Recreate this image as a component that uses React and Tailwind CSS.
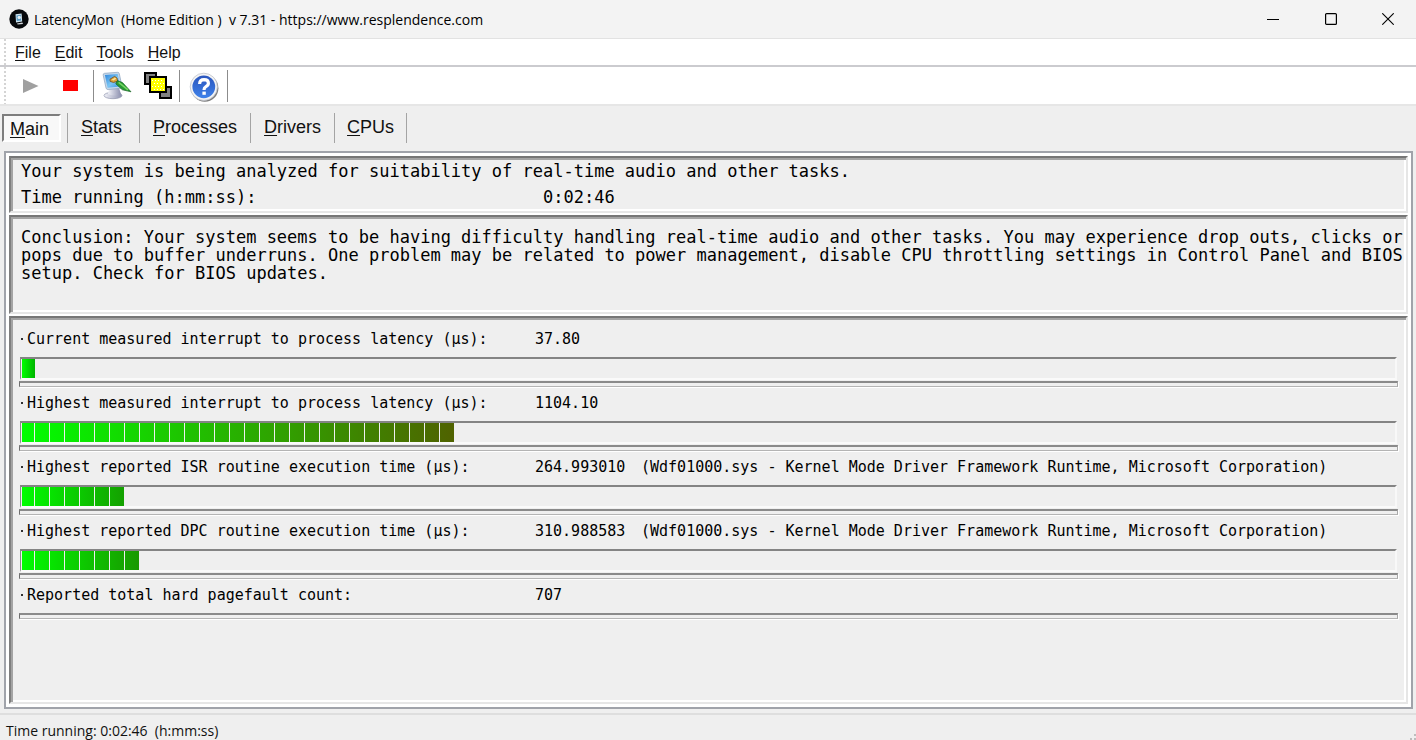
const MONO = "font-['DejaVu_Sans_Mono',monospace]";

const FRAME =
  "border-2 border-t-[#767676] border-l-[#7e7e7e] border-r-[#e6e6e6] border-b-[#e6e6e6] shadow-[inset_2px_2px_0_#a3a3a3,inset_-2px_-2px_0_#ffffff]";

const MENUS = ["File", "Edit", "Tools", "Help"];
const TABS = ["Main", "Stats", "Processes", "Drivers", "CPUs"];
const DRIVER =
  "(Wdf01000.sys - Kernel Mode Driver Framework Runtime, Microsoft Corporation)";

const METERS = [
  { label: "Current measured interrupt to process latency (µs):", value: "37.80", count: 1, end: [0, 180] },
  { label: "Highest measured interrupt to process latency (µs):", value: "1104.10", count: 29, end: [80, 98] },
  { label: "Highest reported ISR routine execution time (µs):", value: "264.993010", note: DRIVER, count: 7, end: [20, 160] },
  { label: "Highest reported DPC routine execution time (µs):", value: "310.988583", note: DRIVER, count: 8, end: [24, 152] },
];

function Accel({ text }) {
  return (
    <>
      <span className="underline decoration-1 underline-offset-2">{text[0]}</span>
      {text.slice(1)}
    </>
  );
}

function segmentColor(t, end) {
  const r = Math.round(end[0] * t);
  const g = Math.round(255 + (end[1] - 255) * t);
  return `rgb(${r},${g},0)`;
}

function Segments({ count, end }) {
  return Array.from({ length: count }, (_, i) => (
    <span
      key={i}
      className="h-full w-[14px] shrink-0 first:w-3 only:w-[13px]"
      style={{
        background: `linear-gradient(to right, ${segmentColor(i / count, end)}, ${segmentColor((i + 1) / count, end)})`,
      }}
    />
  ));
}

function Divider() {
  return (
    <div className="h-[6px] border border-t-2 border-t-[#8a8a8a] border-r-[#a8a8a8] border-b-[#b4b4b4] border-l-[#6e6e6e] shadow-[1px_1px_0_#ffffff]" />
  );
}

function Reading({ label, value, note }) {
  return (
    <div className="flex h-9 items-center whitespace-pre pl-[2px] text-[15px] leading-5">
      <span className="flex w-[514px] shrink-0 items-center gap-1">
        <span className="size-[2px] bg-[#303030]" />
        {label}
      </span>
      <span className="w-[106px] shrink-0">{value}</span>
      {note && <span>{note}</span>}
    </div>
  );
}

function Meter({ count, end, ...reading }) {
  return (
    <section className="h-16">
      <Reading {...reading} />
      <div
        role="meter"
        aria-label={reading.label}
        aria-valuenow={parseFloat(reading.value)}
        className="mx-[1px] mb-[1px] flex h-[23px] gap-[1px] border-t-2 border-r-2 border-b-2 border-l border-t-[#848484] border-l-[#8c8c8c] border-r-[#f8f8f8] border-b-[#fafafa] pl-[1px]"
      >
        <Segments count={count} end={end} />
      </div>
      <Divider />
    </section>
  );
}

function AppIcon() {
  return (
    <svg className="size-5" viewBox="0 0 20 20">
      <circle cx="10" cy="10" r="9.7" fill="#07090c" />
      <path d="M6.5 5.2 12.6 4.4 13.2 12.6 7 13.4z" fill="#cfe3ef" />
      <path d="M7.4 6.4 11.8 5.8 12.2 11.4 7.8 12z" fill="#5c9cc4" />
      <circle cx="10.2" cy="8.4" r="1.7" fill="#e8f2f6" />
      <path d="M8 14.4 13.4 13.6 14 15 8.6 15.4z" fill="#d5d9dc" />
    </svg>
  );
}

function OptionsIcon() {
  return (
    <svg className="size-[30px]" viewBox="0 0 30 30">
      <defs>
        <linearGradient id="screen" x1="0" y1="0" x2="1" y2="1">
          <stop offset="0" stopColor="#2d86dc" />
          <stop offset="0.55" stopColor="#7cc6f4" />
          <stop offset="1" stopColor="#3a92df" />
        </linearGradient>
        <linearGradient id="stand" x1="0" y1="0" x2="1" y2="0">
          <stop offset="0" stopColor="#f1f2f8" />
          <stop offset="1" stopColor="#8b8fae" />
        </linearGradient>
      </defs>
      <ellipse cx="11" cy="24.5" rx="9" ry="3.2" fill="url(#stand)" stroke="#9195ad" strokeWidth=".7" />
      <path d="M7 17h10l2 6q-6 3-13 0z" fill="url(#stand)" />
      <path d="M1.2 4.2Q.8 2.6 2.5 2.3L15.5 1.3Q17 1.2 17.3 2.7L20 15.5Q20.2 17 18.8 17.2L6 18.6Q4.5 18.6 4 17z" fill="#c3d7ea" stroke="#8ba2bd" strokeWidth=".7" />
      <path d="M2.9 4.1 15.7 3 18 15.4 5.6 16.8z" fill="url(#screen)" />
      <path d="M8 8.2 12.6 5.4 15 7 15.6 10.3 11.4 11.4 8.2 10.4z" fill="#e0a63a" stroke="#704c19" strokeWidth=".8" />
      <path d="M9.8 8.6 13 6.8 14.4 7.8 11.2 9.6z" fill="#ffe39a" />
      <path d="M15.4 9.6 20.5 11.6 29 20.8 20.4 18.8 13.8 12.8z" fill="#269a32" stroke="#176124" strokeWidth=".7" />
      <path d="M16.6 11.4 26 18.8" stroke="#77d564" strokeWidth="1.6" />
    </svg>
  );
}

function WindowsIcon() {
  return (
    <svg className="size-7" viewBox="0 0 28 28" shapeRendering="crispEdges">
      <rect x="1" y="1" width="11" height="11" fill="#808080" stroke="#000" strokeWidth="2" />
      <rect x="16" y="15" width="11" height="11" fill="#808080" stroke="#000" strokeWidth="2" />
      <rect x="6" y="5" width="16" height="15" fill="#ffff00" stroke="#000" strokeWidth="2" />
      <path
        d="M8 8.5h1m2 0h1m2 0h1m2 0h1M10 11.5h1m2 0h1m2 0h1m2 0h1M8 14.5h1m2 0h1m2 0h1m2 0h1M10 17.5h1m2 0h1m2 0h1m2 0h1"
        stroke="#fff"
        strokeWidth="1"
      />
    </svg>
  );
}

function HelpIcon() {
  return (
    <svg className="size-[30px]" viewBox="0 0 30 30">
      <defs>
        <linearGradient id="ball" x1="0" y1="0" x2="0" y2="1">
          <stop offset="0" stopColor="#2a55bd" />
          <stop offset="1" stopColor="#3f82ea" />
        </linearGradient>
      </defs>
      <circle cx="15.8" cy="16.2" r="13.6" fill="#7d7d7d" />
      <circle cx="14.8" cy="14.8" r="13.6" fill="#f4f4f4" stroke="#bfc3cb" strokeWidth=".8" />
      <circle cx="14.8" cy="14.8" r="11.4" fill="url(#ball)" />
      <path d="M10.6 12Q10.8 7.6 15 7.6 19.4 7.7 19.4 11.2 19.4 13.3 16.9 14.6 15 15.6 15 18" fill="none" stroke="#fff" strokeWidth="3.2" />
      <rect x="13.4" y="19.6" width="3.4" height="3.2" fill="#fff" />
    </svg>
  );
}

function Grip() {
  return <span className="ml-1 w-[2px] self-stretch bg-[repeating-linear-gradient(to_bottom,#d4d4d4_0_2px,#ffffff_2px_4px)]" />;
}

function Separator() {
  return <span className="h-8 w-px bg-[#8c8c8c]" />;
}

export default function App() {
  return (
    <div className="flex min-h-screen flex-col bg-[#efefef] font-['Liberation_Sans',Arial,sans-serif] text-[#111111]">
      <header className="flex h-[39px] items-center border-b border-[#e2e2e2] bg-[#f3f3f3] pl-[9px]">
        <AppIcon />
        <h1 className="ml-[5px] flex-1 whitespace-pre font-['Open_Sans',sans-serif] text-[14px] text-black">
          {"LatencyMon  (Home Edition )  v 7.31 - https://www.resplendence.com"}
        </h1>
        <button aria-label="Minimize" className="flex h-full w-[58px] items-center justify-center">
          <svg className="size-3" viewBox="0 0 12 12"><path d="M0 6.5h12" stroke="#000" /></svg>
        </button>
        <button aria-label="Maximize" className="flex h-full w-[58px] items-center justify-center">
          <svg className="size-3" viewBox="0 0 12 12"><rect x=".6" y=".6" width="10.8" height="10.8" rx="1" fill="none" stroke="#000" strokeWidth="1.2" /></svg>
        </button>
        <button aria-label="Close" className="flex h-full w-14 items-center justify-center">
          <svg className="size-3" viewBox="0 0 12 12"><path d="M.3.3l11.4 11.4M11.7.3.3 11.7" stroke="#000" strokeWidth="1.1" /></svg>
        </button>
      </header>

      <nav className="flex h-7 items-center border-b-2 border-[#cbcbcf] bg-white text-[16px]">
        <Grip />
        <div className="ml-[9px] flex gap-[14px] pt-[2px]">
          {MENUS.map((m) => (
            <button key={m}><Accel text={m} /></button>
          ))}
        </div>
      </nav>

      <div role="toolbar" className="flex h-[39px] items-center border-b-2 border-[#e6e6e6] bg-white">
        <Grip />
        <button aria-label="Start" className="ml-[17px] mr-6">
          <svg className="block h-[14px] w-4" viewBox="0 0 16 14"><path d="M0 0 15.5 7 0 14z" fill="#a0a0a0" /></svg>
        </button>
        <button aria-label="Stop" className="mr-[15px] h-[11px] w-[15px] bg-[#ff0000]" />
        <Separator />
        <button aria-label="Options" className="mx-2"><OptionsIcon /></button>
        <button aria-label="Windows" className="ml-1 mr-[7px]"><WindowsIcon /></button>
        <Separator />
        <button aria-label="Help" className="ml-[9px] mr-2 pt-[2px]"><HelpIcon /></button>
        <Separator />
      </div>

      <div role="tablist" className="flex h-[45px] items-center pb-[2px] pl-[2px] text-[18px]">
        {TABS.map((t, i) =>
          i === 0 ? (
            <button key={t} role="tab" aria-selected="true" className="mr-[6px] h-7 w-[59px] border-2 border-t-[#7d7d7d] border-l-[#7d7d7d] border-r-white border-b-white bg-[#f8f8f8] pr-1">
              <Accel text={t} />
            </button>
          ) : (
            <button key={t} role="tab" aria-selected="false" className="h-[30px] min-w-[72px] border-l border-[#a4a4a4] px-[13px] text-left last:border-r last:px-3">
              <Accel text={t} />
            </button>
          )
        )}
      </div>

      <main className={`mx-1 mr-[3px] flex flex-1 flex-col gap-[2px] border-2 border-[#a0a3aa] bg-white p-[3px] text-black ${MONO}`}>
        <section className={`flex h-[57px] flex-col justify-center whitespace-pre bg-[#efefef] pb-[2px] pl-[10px] text-[17px] ${FRAME}`}>
          <p className="leading-[26px]">Your system is being analyzed for suitability of real-time audio and other tasks.</p>
          <p className="flex leading-[26px]">
            <span className="w-[522px]">Time running (h:mm:ss):</span>
            <span>0:02:46</span>
          </p>
        </section>

        <section className={`h-[99px] bg-[#efefef] pl-[10px] pt-[11px] text-[17px] leading-[18px] ${FRAME}`}>
          <p className="whitespace-nowrap">
            Conclusion: Your system seems to be having difficulty handling real-time audio and other tasks. You may experience drop outs, clicks or
            <br />
            pops due to buffer underruns. One problem may be related to power management, disable CPU throttling settings in Control Panel and BIOS
            <br />
            setup. Check for BIOS updates.
          </p>
        </section>

        <section className={`flex-1 bg-[#efefef] pl-2 pr-2 pt-[3px] ${FRAME}`}>
          {METERS.map((m) => (
            <Meter key={m.label} {...m} />
          ))}
          <div className="flex flex-col">
            <Reading label="Reported total hard pagefault count:" value="707" />
            <Divider />
          </div>
        </section>
      </main>

      <footer className="mt-1 flex h-[27px] items-end justify-between border-t-2 border-[#dedede] pl-[6px]">
        <p className="whitespace-pre font-['Open_Sans',sans-serif] text-[14px] leading-[18px]">{"Time running: 0:02:46  (h:mm:ss)"}</p>
        <svg className="size-[6px]" viewBox="0 0 6 6" fill="#bdbdbd">
          <path d="M4 0h2v2H4zM4 4h2v2H4zM0 4h2v2H0z" />
        </svg>
      </footer>
    </div>
  );
}
